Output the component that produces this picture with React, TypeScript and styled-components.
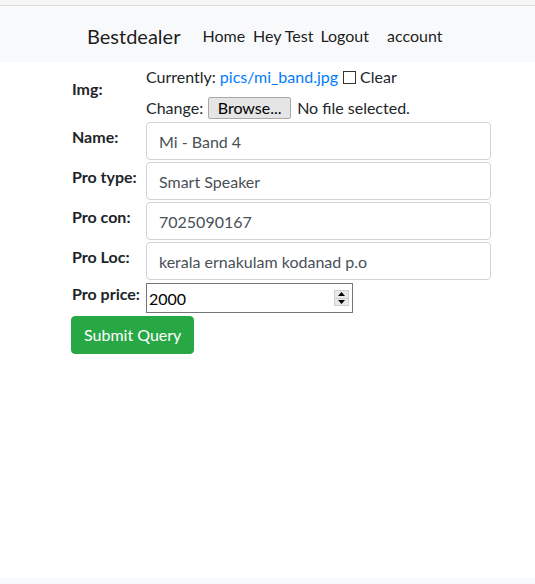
import React from "react";
import styled, { createGlobalStyle } from "styled-components";

const GlobalStyle = createGlobalStyle`
  html, body { margin: 0; padding: 0; background: #fff; }
  body {
    font-family: Lato, "Noto Sans", sans-serif;
    font-size: 16px;
    line-height: 1.5;
    color: #212529;
  }
  * { box-sizing: border-box; }
`;

const Page = styled.div`
  display: flex;
  flex-direction: column;
  min-height: 100vh;
`;

const TopStrip = styled.div`
  height: 6px;
  background: #f6f6f6;
  border-bottom: 1px solid #dcdcdc;
`;

const Navbar = styled.nav`
  display: flex;
  align-items: center;
  height: 56px;
  background: #f8f9fa;
  padding: 3px 0 0 87px;
`;

const Brand = styled.a`
  font-size: 20px;
  color: rgba(0, 0, 0, 0.9);
  text-decoration: none;
  margin-right: 22px;
`;

const NavLink = styled.a<{ $ml: number }>`
  color: rgba(0, 0, 0, 0.9);
  text-decoration: none;
  margin-left: ${(p) => p.$ml}px;
`;

const Main = styled.main`
  flex: 1;
  padding: 2px 0 0 71px;
`;

const FormTable = styled.table`
  border-collapse: collapse;
`;

const Th = styled.th`
  padding: 1px;
  width: 74px;
  text-align: left;
  vertical-align: middle;
  white-space: nowrap;
  font-weight: 700;
`;

const Label = styled.label`
  display: inline-block;
  margin-bottom: 8px;
`;

const Td = styled.td`
  padding: 1px;
`;

const Line = styled.div<{ $h: number; $pt?: number }>`
  display: flex;
  align-items: center;
  height: ${(p) => p.$h}px;
  padding-top: ${(p) => p.$pt ?? 0}px;
  white-space: nowrap;
`;

const FileLink = styled.a`
  color: #007bff;
  text-decoration: none;
  margin-left: 4px;
`;

const Check = styled.input`
  appearance: none;
  width: 13px;
  height: 13px;
  margin: 0 4px 0 5px;
  border: 1px solid #333;
  background: #fff;
`;

const BrowseButton = styled.button`
  font-family: inherit;
  font-size: 16px;
  line-height: 1;
  height: 22px;
  width: 83px;
  padding: 0;
  margin: 0 6px 0 5px;
  color: #000;
  background: #e5e5e5;
  border: 1px solid #a9a9a9;
  border-radius: 2px;
`;

const TextInput = styled.input`
  display: block;
  width: 345px;
  height: 38px;
  padding: 6px 12px;
  font-family: inherit;
  font-size: 16px;
  color: #495057;
  background: #fff;
  border: 1px solid #ced4da;
  border-radius: 4px;
  outline: none;
`;

const NumberBox = styled.div`
  display: flex;
  align-items: center;
  width: 207px;
  height: 30px;
  border: 1px solid #767676;
  background: #fff;
  padding: 0 3px 0 2px;
`;

const NumberField = styled.input`
  flex: 1;
  min-width: 0;
  border: none;
  outline: none;
  padding: 0;
  font-family: inherit;
  font-size: 16px;
  color: #000;
  background: transparent;
`;

const Spinner = styled.div`
  display: flex;
  flex-direction: column;
  width: 15px;
  height: 16px;
  background: #e9e9e9;
  border: 1px solid #cfcfcf;
`;

const SpinHalf = styled.div<{ $top?: boolean }>`
  flex: 1;
  display: flex;
  align-items: center;
  justify-content: center;
  border-bottom: ${(p) => (p.$top ? "1px solid #cfcfcf" : "none")};
`;

const SubmitButton = styled.button`
  margin-top: 1px;
  height: 38px;
  padding: 6px 12px;
  font-family: inherit;
  font-size: 16px;
  line-height: 1.5;
  color: #fff;
  background: #28a745;
  border: 1px solid #28a745;
  border-radius: 4px;
`;

const Footer = styled.footer`
  height: 6px;
  background: #f8f9fa;
`;

const Tri = ({ up }: { up?: boolean }) => (
  <svg width="7" height="4" viewBox="0 0 7 4">
    <path d={up ? "M0 4 L3.5 0 L7 4 Z" : "M0 0 L3.5 4 L7 0 Z"} fill="#000" />
  </svg>
);

const fields = [
  { label: "Name:", value: "Mi - Band 4" },
  { label: "Pro type:", value: "Smart Speaker" },
  { label: "Pro con:", value: "7025090167" },
  { label: "Pro Loc:", value: "kerala ernakulam kodanad p.o" },
];

export default function App() {
  return (
    <Page>
      <GlobalStyle />
      <TopStrip />
      <Navbar>
        <Brand href="#">Bestdealer</Brand>
        <NavLink $ml={0} href="#">Home</NavLink>
        <NavLink $ml={8} href="#">Hey Test</NavLink>
        <NavLink $ml={7} href="#">Logout</NavLink>
        <NavLink $ml={18} href="#">account</NavLink>
      </Navbar>
      <Main>
        <form onSubmit={(e) => e.preventDefault()}>
          <FormTable>
            <tbody>
              <tr>
                <Th><Label>Img:</Label></Th>
                <Td>
                  <Line $h={24}>
                    Currently:<FileLink href="#">pics/mi_band.jpg</FileLink>
                    <Check type="checkbox" />Clear
                  </Line>
                  <Line $h={31} $pt={6}>
                    Change:<BrowseButton type="button">Browse...</BrowseButton>No file selected.
                  </Line>
                </Td>
              </tr>
              {fields.map((f) => (
                <tr key={f.label}>
                  <Th><Label>{f.label}</Label></Th>
                  <Td><TextInput defaultValue={f.value} /></Td>
                </tr>
              ))}
              <tr>
                <Th><Label>Pro price:</Label></Th>
                <Td>
                  <NumberBox>
                    <NumberField defaultValue="2000" />
                    <Spinner>
                      <SpinHalf $top><Tri up /></SpinHalf>
                      <SpinHalf><Tri /></SpinHalf>
                    </Spinner>
                  </NumberBox>
                </Td>
              </tr>
            </tbody>
          </FormTable>
          <SubmitButton type="submit">Submit Query</SubmitButton>
        </form>
      </Main>
      <Footer />
    </Page>
  );
}
